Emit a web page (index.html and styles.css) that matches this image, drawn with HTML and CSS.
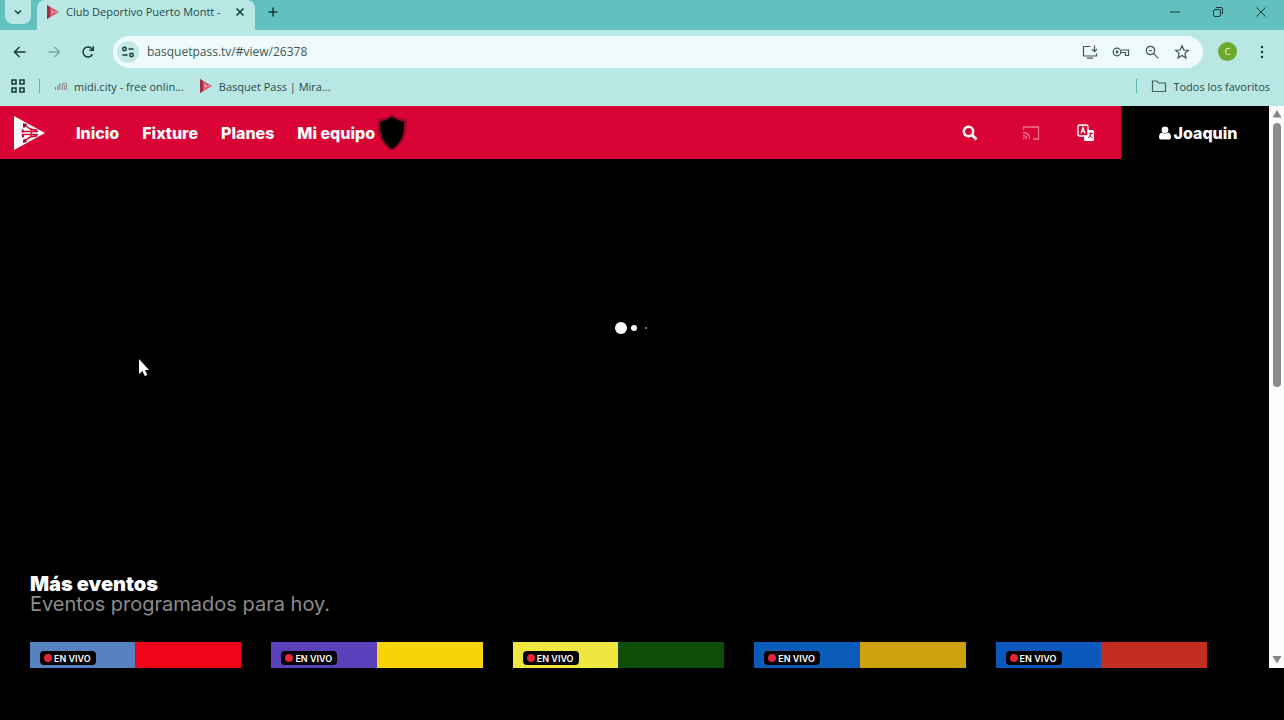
FILE: index.html
```html
<!DOCTYPE html>
<html lang="es">

<head>
    <meta charset="UTF-8">
    <meta name="viewport" content="width=device-width, initial-scale=1.0">
    <title>Club Deportivo Puerto Montt - Basquet Pass</title>
    <link rel="stylesheet" href="styles.css">
</head>

<body>
    <svg width="0" height="0" class="defs" aria-hidden="true">
        <symbol id="favicon" viewBox="0 0 14 16">
            <path d="M1 1 13 8 1 15z" fill="#d8485f" />
            <path d="M1 1v14l3-2V3z" fill="#9c3048" />
            <path d="M5 5c2 1 2 5 0 6M5 8h6" fill="none" stroke="#f3b7c0" />
        </symbol>
    </svg>

    <div class="browser">
        <div class="tabs">
            <button class="tab-search" aria-label="Buscar pestañas">
                <svg width="10" height="10" viewBox="0 0 10 10"><path d="M2 3.500 5 6.500 8 3.500" /></svg>
            </button>
            <div class="tab">
                <svg class="favicon" width="14" height="16"><use href="#favicon" /></svg>
                <span class="tab-title">Club Deportivo Puerto Montt -</span>
                <button class="tab-close" aria-label="Cerrar"><svg width="10" height="10" viewBox="0 0 10 10"><path d="M1.500 1.500l7 7M8.500 1.500l-7 7" /></svg></button>
            </div>
            <button class="new-tab" aria-label="Nueva pestaña"><svg width="12" height="12" viewBox="0 0 12 12"><path d="M6 1.500v9M1.500 6h9" /></svg></button>
            <div class="window-buttons">
                <button aria-label="Minimizar"><svg width="12" height="12" viewBox="0 0 12 12"><path d="M1 6h10" /></svg></button>
                <button aria-label="Restaurar"><svg width="12" height="12" viewBox="0 0 12 12"><rect x="1.500" y="3.500" width="7" height="7" rx="1.500" /><path d="M4 1.500h5q1.500 0 1.500 1.500v5" /></svg></button>
                <button aria-label="Cerrar ventana"><svg width="12" height="12" viewBox="0 0 12 12"><path d="M1.500 1.500l9 9M10.500 1.500l-9 9" /></svg></button>
            </div>
        </div>

        <div class="toolbar">
            <button aria-label="Atrás"><svg width="14" height="14" viewBox="0 0 14 14"><path d="M12.500 7h-11M6.500 2l-5 5 5 5" /></svg></button>
            <button class="off" aria-label="Adelante"><svg width="14" height="14" viewBox="0 0 14 14"><path d="M1.500 7h11M7.500 2l5 5-5 5" /></svg></button>
            <button aria-label="Recargar"><svg width="14" height="14" viewBox="0 0 14 14"><path d="M11.500 9.200a5 5 0 1 1-.6-5.400L12 5" /><path d="M12.300 1.200v4H8.300" /></svg></button>
            <div class="address">
                <button class="site-info" aria-label="Información del sitio"><svg width="14" height="12" viewBox="0 0 14 12"><circle cx="3.500" cy="3" r="1.700" /><path d="M7.500 3h5M1.500 9h5" /><circle cx="10.500" cy="9" r="1.700" /></svg></button>
                <input type="text" aria-label="Dirección" value="basquetpass.tv/#view/26378">
                <div class="address-icons">
                    <button aria-label="Instalar"><svg width="16" height="16" viewBox="0 0 16 16"><path d="M8.500 2.500H1.500v9.500h13V9.500M5 14.200h6M12.500 1.500v6M10 5.200l2.500 2.500L15 5.200" /></svg></button>
                    <button aria-label="Contraseñas"><svg width="18" height="16" viewBox="0 0 18 16"><circle cx="5" cy="8" r="3.800" /><circle cx="5" cy="8" r=".8" /><path d="M9 6h7.500v5.500h-3V8.500H9" /></svg></button>
                    <button aria-label="Zoom"><svg width="16" height="16" viewBox="0 0 16 16"><circle cx="6.500" cy="6.500" r="4.200" /><path d="M9.700 9.700l4.600 4.600M4.800 6.500h3.400" /></svg></button>
                    <button aria-label="Favorito"><svg width="16" height="16" viewBox="0 0 16 16"><path d="M8 1.800l1.800 4.200 4.500.4-3.400 3 1 4.500L8 11.500l-3.900 2.400 1-4.500-3.400-3 4.500-.4z" /></svg></button>
                </div>
            </div>
            <button class="profile" aria-label="Perfil">C</button>
            <button class="menu" aria-label="Menú"><svg width="4" height="16" viewBox="0 0 4 16"><circle cx="2" cy="3" r="1.200" /><circle cx="2" cy="8" r="1.200" /><circle cx="2" cy="13" r="1.200" /></svg></button>
        </div>

        <div class="bookmarks">
            <button class="apps" aria-label="Aplicaciones"><svg width="14" height="14" viewBox="0 0 14 14"><path d="M1 1h4v4H1zM9 1h4v4H9zM1 9h4v4H1zM9 9h4v4H9z" /></svg></button>
            <span class="divider"></span>
            <a href="#" class="midi">
                <svg width="14" height="12" viewBox="0 0 14 12"><path d="M1.500 10V7M4 10V5M6 10V3M8.500 10V5q0-2 2-2 2 0 2 2v5M10.500 10V5" stroke="#8b8f90" stroke-width="1.200" fill="none" /></svg>
                midi.city - free onlin...
            </a>
            <a href="#">
                <svg width="14" height="16"><use href="#favicon" /></svg>
                Basquet Pass | Mira...
            </a>
            <span class="divider last"></span>
            <a href="#">
                <svg width="16" height="14" viewBox="0 0 16 14"><path d="M1.500 2h4.500l1.500 2h7v8.500h-13z" fill="none" stroke="#47605f" stroke-width="1.200" /></svg>
                Todos los favoritos
            </a>
        </div>

        <div class="view">
            <div class="page">
                <header>
                    <nav>
                        <a href="#" class="logo" aria-label="Basquet Pass">
                            <svg width="32" height="36" viewBox="0 0 32 36">
                                <path d="M1 1 32 18 1 35z" fill="#fff" />
                                <g fill="none" stroke="#d90435" stroke-width="1.300">
                                    <path d="M13 11q4 4 11 4M13 25q4-4 11-4M9 16.500h16M9 19.500h16M17 13q3 5 0 10" />
                                    <path d="M12 10q-5 8 0 16" stroke="#a01238" stroke-width="2" stroke-dasharray="3 2" />
                                </g>
                                <path d="M10 8l4 1-1 3-3-1zM10 25l3-1 1 3-4 1z" fill="#8e1535" />
                            </svg>
                        </a>
                        <a href="#">Inicio</a>
                        <a href="#">Fixture</a>
                        <a href="#">Planes</a>
                        <a href="#" class="team">Mi equipo
                            <svg width="32" height="38" viewBox="0 0 32 38">
                                <path d="M16 0q6 5 15 5 2 22-15 32Q-1 27 1 5q9 0 15-5z" fill="#a3062c" />
                                <path d="M16 3q6 4 12 5 1 19-12 27Q3 27 4 8q6-1 12-5z" fill="#000" stroke="#3b0511" />
                            </svg>
                        </a>
                    </nav>
                    <div class="tools">
                        <button aria-label="Buscar"><svg width="16" height="16" viewBox="0 0 16 16"><circle cx="6.500" cy="6.500" r="4.700" fill="none" stroke="#fff" stroke-width="2.400" /><path d="M10 10l4.500 4.500" stroke="#fff" stroke-width="2.800" /></svg></button>
                        <button class="cast" aria-label="Transmitir"><svg width="18" height="14" viewBox="0 0 18 14"><path d="M1.500 4V1h15v12H11M1 12.500h1.500M1 9.500q3.500 0 3.500 3.500M1 6.500q6.500 0 6.500 6.500" fill="none" stroke="#f0718b" stroke-width="1.300" /></svg></button>
                        <button aria-label="Idioma">
                            <svg width="18" height="18" viewBox="0 0 18 18">
                                <rect x="7" y="6" width="10" height="11" rx="1.500" fill="#fff" />
                                <rect x="1" y="1" width="10" height="11" rx="1.500" fill="#d90435" stroke="#fff" stroke-width="1.400" />
                                <path d="M4 9.500l2-6 2 6M4.700 7.500h2.600" fill="none" stroke="#fff" stroke-width="1.200" />
                                <path d="M12 9.500h4M14 8.500v1q-.5 3-3 4.500M12.500 11q1 2 3 3" fill="none" stroke="#d90435" />
                            </svg>
                        </button>
                    </div>
                    <a href="#" class="user">
                        <svg width="12" height="14" viewBox="0 0 12 14"><circle cx="6" cy="3.800" r="3.400" fill="#fff" /><path d="M3 6.500q3 2 6 0 3 .5 3 5 0 2-2 2H2q-2 0-2-2 0-4.500 3-5z" fill="#fff" /></svg>
                        Joaquin
                    </a>
                </header>

                <main>
                    <div class="player">
                        <div class="loader"><i></i><i></i><i></i></div>
                    </div>
                    <section class="events">
                        <h2>Más eventos</h2>
                        <p>Eventos programados para hoy.</p>
                        <div class="cards">
                            <a href="#" class="card celeste"><span class="live">EN VIVO</span></a>
                            <a href="#" class="card violet"><span class="live">EN VIVO</span></a>
                            <a href="#" class="card yellow"><span class="live">EN VIVO</span></a>
                            <a href="#" class="card gold"><span class="live">EN VIVO</span></a>
                            <a href="#" class="card blue"><span class="live">EN VIVO</span></a>
                        </div>
                    </section>
                </main>
            </div>
            <div class="scrollbar">
                <svg width="10" height="8" viewBox="0 0 10 8"><path d="M5 0l4.500 7.500h-9z" /></svg>
                <div class="track"><div class="thumb"></div></div>
                <svg width="10" height="8" viewBox="0 0 10 8"><path d="M5 7.500L.5 0h9z" /></svg>
            </div>
        </div>
    </div>

    <svg class="cursor" width="12" height="19" viewBox="0 0 12 19"><path d="M1 1v15l3.500-3 2.300 5 2.500-1-2.300-5H11z" fill="#fff" /></svg>
</body>

</html>
```
FILE: styles.css
```css
* {
    box-sizing: border-box;
}

body {
    margin: 0;
    height: 100vh;
    padding-bottom: 52px;
    background: #000;
    overflow: hidden;
    font-family: "Open Sans", "Noto Sans", sans-serif;
    font-size: 12px;
    color: #29494a;
}

button {
    display: flex;
    align-items: center;
    justify-content: center;
    padding: 0;
    border: none;
    background: none;
    color: inherit;
}

a {
    color: inherit;
    text-decoration: none;
}

svg {
    display: block;
    flex-shrink: 0;
}

.defs {
    position: absolute;
}

.browser {
    display: flex;
    flex-direction: column;
    height: 100%;
    background: #b9e7e4;
}

/* tab strip */
.tabs {
    display: flex;
    height: 30px;
    background: #62c1bf;
}

.tabs button svg,
.toolbar button svg,
.apps svg {
    fill: none;
    stroke: #17393b;
    stroke-width: 1.5;
}

.tabs .tab-search {
    width: 26px;
    height: 24px;
    margin: 0 6px 0 5px;
    border-radius: 0 0 8px 8px;
    background: #b9e7e4;
}

.tab {
    display: flex;
    align-items: center;
    width: 218px;
    height: 30px;
    padding: 0 10px 7px 9px;
    border-radius: 8px 8px 0 0;
    background: #b9e7e4;
}

.tab-title {
    flex: 1;
    margin-left: 6px;
    font-size: 11px;
    white-space: nowrap;
}

.new-tab {
    width: 36px;
    height: 24px;
}

.window-buttons {
    display: flex;
    gap: 31px;
    height: 24px;
    margin-left: auto;
    padding-right: 17px;
}

.tabs .window-buttons svg {
    stroke-width: 1;
}

/* address row */
.toolbar {
    display: flex;
    align-items: center;
    height: 43px;
    padding: 0 20px 0 13px;
}

.toolbar > button {
    margin-right: 20px;
}

.toolbar .off svg {
    stroke: #7ba7a7;
}

.address {
    display: flex;
    flex: 1;
    align-items: center;
    height: 32px;
    margin-right: 15px;
    margin-left: -2px;
    padding: 0 13px 0 4px;
    border-radius: 16px;
    background: #effbfa;
}

.site-info {
    width: 22px;
    height: 22px;
    border-radius: 50%;
    background: #c4e8e5;
}

.address input {
    flex: 1;
    min-width: 0;
    margin-left: 8px;
    padding: 0;
    border: none;
    outline: none;
    background: none;
    color: #3f5657;
    font-family: inherit;
    font-size: 12px;
}

.address-icons {
    display: flex;
    gap: 14px;
}

.toolbar .address-icons svg {
    stroke: #3f5254;
    stroke-width: 1.2;
}

.toolbar .profile {
    width: 19px;
    height: 19px;
    border-radius: 50%;
    background: #6da92c;
    color: #e9f6dc;
    font-family: inherit;
    font-size: 9px;
}

.toolbar .menu {
    margin: 0 0 0 3px;
}

.toolbar .menu svg {
    fill: #17393b;
    stroke: none;
}

/* bookmarks */
.bookmarks {
    display: flex;
    align-items: center;
    height: 33px;
    padding: 0 14px 7px 11px;
    font-size: 11px;
}

.bookmarks a {
    display: flex;
    align-items: center;
    gap: 6px;
    white-space: nowrap;
}

.bookmarks .midi {
    margin-right: 15px;
}

.divider {
    width: 1px;
    height: 14px;
    margin: 0 14px;
    background: #5fb7b3;
}

.divider.last {
    margin-left: auto;
}

/* web page */
.view {
    display: flex;
    flex: 1;
    min-height: 0;
}

.page {
    display: flex;
    flex: 1;
    flex-direction: column;
    background: #000;
    color: #fff;
    font-family: Inter, Roboto, sans-serif;
}

header {
    display: flex;
    height: 53px;
    background: #d90435;
    font-size: 16px;
    font-weight: 800;
}

nav {
    display: flex;
    align-items: center;
    gap: 23px;
    padding-left: 13px;
}

.logo {
    margin-right: 8px;
}

.team {
    display: flex;
    align-items: center;
    gap: 1px;
}

.tools {
    display: flex;
    align-items: center;
    gap: 44px;
    margin-left: auto;
    padding-right: 26px;
}

.tools .cast {
    margin-right: -7px;
}

.user {
    display: flex;
    align-items: center;
    justify-content: center;
    gap: 3px;
    width: 148px;
    padding-left: 6px;
    background: #000;
}

main {
    display: flex;
    flex: 1;
    flex-direction: column;
}

.player {
    display: flex;
    flex: 1;
    justify-content: center;
    padding: 162px 8px 0 0;
}

.loader {
    display: flex;
    align-items: center;
    gap: 4px;
    height: 13px;
}

.loader i {
    width: 12px;
    height: 12px;
    border-radius: 50%;
    background: #fff;
}

.loader i:nth-child(2) {
    width: 6px;
    height: 6px;
}

.loader i:nth-child(3) {
    width: 2px;
    height: 2px;
    margin-left: 4px;
    background: #999;
}

.events {
    padding: 0 62px 0 30px;
}

.events h2,
.events p {
    margin: 0;
    font-size: 20px;
    line-height: 20px;
}

.events h2 {
    font-weight: 900;
}

.events p {
    color: #8b8b8b;
}

.cards {
    display: grid;
    grid-template-columns: repeat(5, 1fr);
    gap: 30px;
    margin-top: 28px;
}

.card {
    height: 26px;
    padding: 9px 0 0 10px;
    background: linear-gradient(90deg, var(--home) 50%, var(--away) 50%);
}

.celeste {
    --home: #5782c2;
    --away: #ef0419;
}

.violet {
    --home: #5a40bb;
    --away: #f8d309;
}

.yellow {
    --home: #f0e640;
    --away: #0d4c09;
}

.gold {
    --home: #0b5bb8;
    --away: #cda20c;
}

.blue {
    --home: #0b58bd;
    --away: #c42e20;
}

.live {
    display: flex;
    align-items: center;
    gap: 2px;
    width: 56px;
    height: 14px;
    padding-left: 4px;
    border-radius: 4px;
    background: #000;
    font-size: 9px;
    font-weight: 600;
    white-space: nowrap;
}

.live::before {
    content: "";
    width: 8px;
    height: 8px;
    border-radius: 50%;
    background: #e52539;
}

.scrollbar {
    display: flex;
    flex-direction: column;
    align-items: center;
    gap: 5px;
    width: 15px;
    padding: 4px 0;
    background: #fcfcfc;
}

.scrollbar path {
    fill: #858585;
}

.track {
    flex: 1;
    width: 8px;
}

.thumb {
    height: 50%;
    border-radius: 4px;
    background: #8c8c8c;
}

.cursor {
    position: absolute;
    left: 138px;
    top: 358px;
}
```
